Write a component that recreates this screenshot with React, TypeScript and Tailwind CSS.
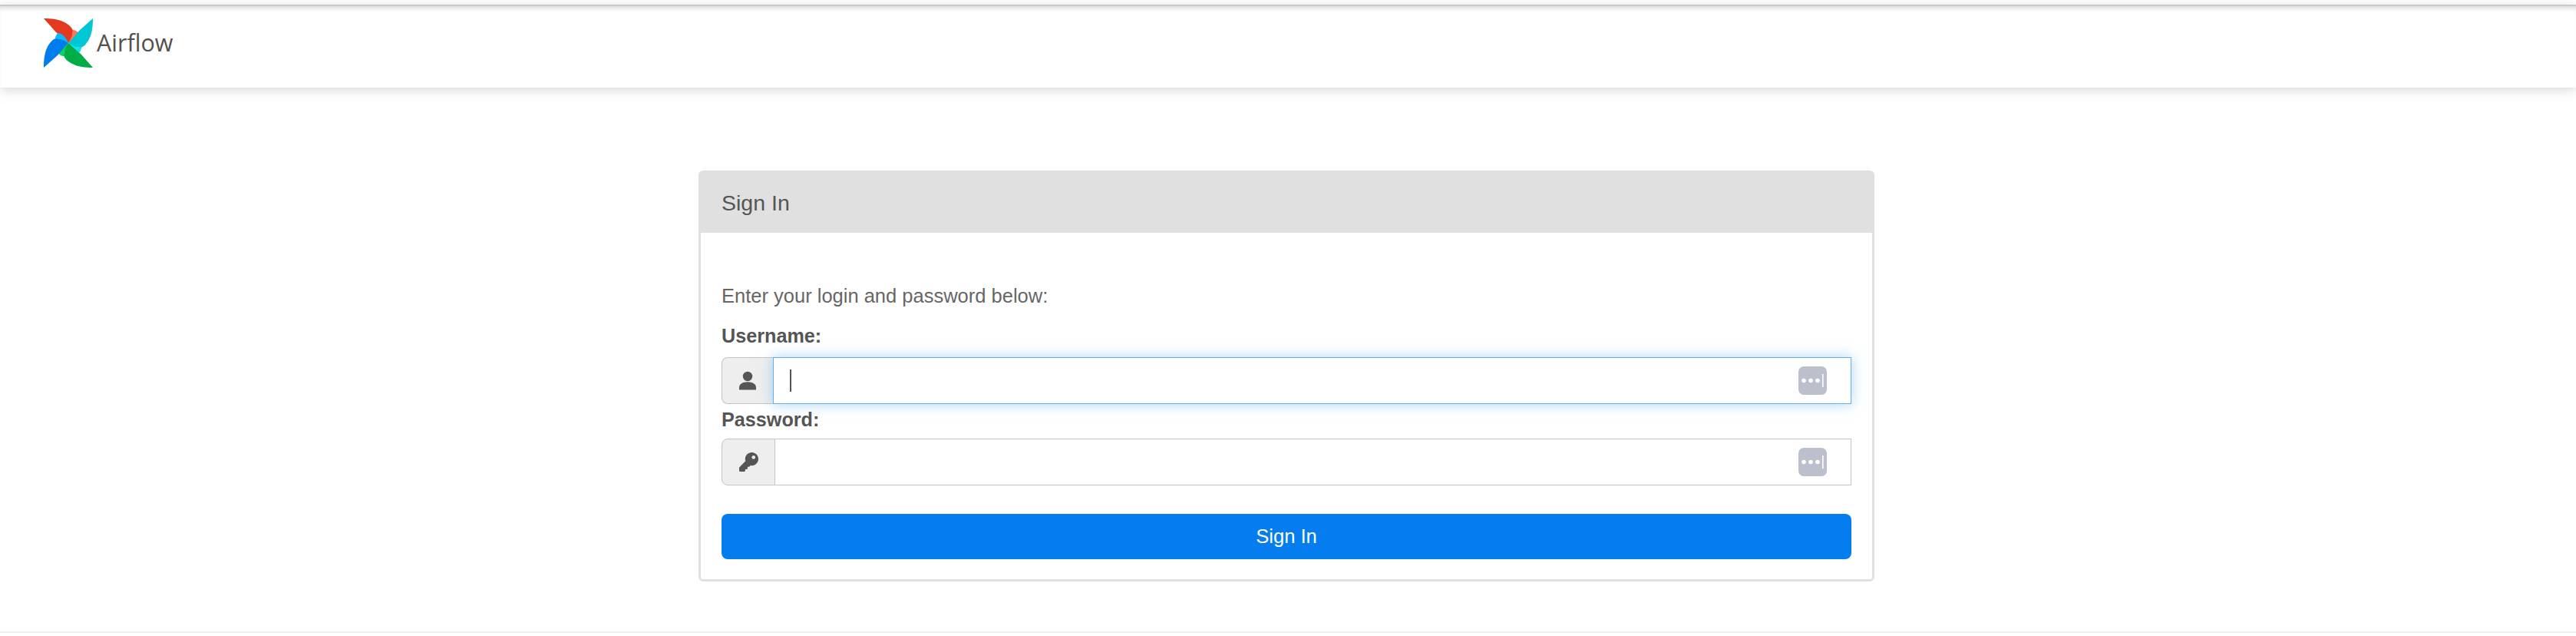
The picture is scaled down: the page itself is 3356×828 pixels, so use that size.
import { FaKey } from 'react-icons/fa';

function Logo() {
  const blades = [
    { rotate: 0, dark: '#e43921', light: '#ff7557' },
    { rotate: 90, dark: '#00c7d4', light: '#11e1ee' },
    { rotate: 180, dark: '#00ad46', light: '#04d659' },
    { rotate: 270, dark: '#017cee', light: '#0cb6ff' },
  ];
  return (
    <svg viewBox="0 0 64 64" className="w-16 h-16 shrink-0">
      {blades.map((b) => (
        <g key={b.rotate} transform={`rotate(${b.rotate} 32 32)`}>
          <path d="M0 0 C10 0 20 1 27 5 C33 8 37 12 38 16 L37 26 L32 32 C27 27 22 23 16 18 Z" fill={b.dark} />
          <path d="M38 15 C41 15 44 17 45 19 C45 24 38 30 32 32 C35 27 38 22 38 15 Z" fill={b.light} />
        </g>
      ))}
    </svg>
  );
}

function KeychainIcon() {
  return (
    <svg viewBox="0 0 37 37" className="w-[37px] h-[37px] shrink-0">
      <rect width="37" height="37" rx="7" fill="#bcc0cc" />
      <circle cx="7" cy="18.5" r="2.8" fill="#fff" />
      <circle cx="16" cy="18.5" r="2.8" fill="#fff" />
      <circle cx="25" cy="18.5" r="2.8" fill="#fff" />
      <rect x="31" y="10" width="1.6" height="17" fill="#fff" />
    </svg>
  );
}

function UserIcon() {
  return (
    <svg viewBox="0 0 24 26" className="w-[22px] h-[25px] text-[#555]" fill="currentColor">
      <circle cx="12" cy="7" r="6.8" />
      <path d="M0 26 V23 C0 18 5 15 12 15 C19 15 24 18 24 23 V26 Z" />
    </svg>
  );
}

export default function App() {
  return (
    <div className="min-h-[828px] bg-white font-['Liberation_Sans',Arial,sans-serif] text-[#555]">
      <div className="h-[6px] bg-white" />
      <nav className="h-[108px] bg-white border-t-2 border-[#c9c9c9] shadow-[inset_0_7px_7px_-5px_rgba(0,0,0,0.18),0_3px_14px_rgba(0,0,0,0.16)] flex items-start pl-[57px] pt-4">
        <Logo />
        <span className="ml-[5px] mt-[13px] text-[30.5px] leading-[36px] font-['Open_Sans',sans-serif] text-[#51504f]">Airflow</span>
      </nav>

      <main className="pt-[108px] pl-[910px]">
        <section className="w-[1532px] h-[535px] rounded-md border-[3px] border-[#e0e0e0] bg-white overflow-hidden">
          <header className="h-[78px] bg-[#e0e0e0] flex items-center px-[27px] text-[28.5px]">Sign In</header>
          <div className="px-[27px] pt-[65px]">
            <p className="text-[25.5px] leading-[34px] text-[#666]">Enter your login and password below:</p>
            <label className="block mt-[18px] text-[25.2px] leading-[34px] font-bold">Username:</label>
            <div className="mt-[11px] flex h-[61px]">
              <div className="w-[67px] flex items-center justify-center bg-[#eee] border border-r-0 border-[#c4c4c4] rounded-l-lg">
                <UserIcon />
              </div>
              <div className="flex-1 flex items-center pl-[21px] pr-[31px] bg-white border border-[#66afe9] shadow-[0_0_16px_rgba(102,175,233,0.55)]">
                <span className="w-[2px] h-[29px] bg-[#555]" />
                <input className="flex-1 min-w-0 outline-none bg-transparent" aria-label="Username" />
                <KeychainIcon />
              </div>
            </div>
            <label className="block mb-[5px] text-[25.2px] leading-[40px] font-bold">Password:</label>
            <div className="flex h-[61px]">
              <div className="w-[70px] flex items-center justify-center bg-[#eee] border border-[#c4c4c4] rounded-l-lg">
                <FaKey className="w-[25px] h-[25px] text-[#555]" />
              </div>
              <div className="flex-1 flex items-center pl-[21px] pr-[31px] bg-white border border-l-0 border-[#c4c4c4]">
                <input type="password" className="flex-1 min-w-0 outline-none bg-transparent" aria-label="Password" />
                <KeychainIcon />
              </div>
            </div>
            <button className="mt-[37px] w-full h-[59px] rounded-lg bg-[#057dee] text-white text-[25.5px]">Sign In</button>
          </div>
        </section>
      </main>

      <div className="mt-[65px] h-[2px] bg-[#eee]" />
    </div>
  );
}
